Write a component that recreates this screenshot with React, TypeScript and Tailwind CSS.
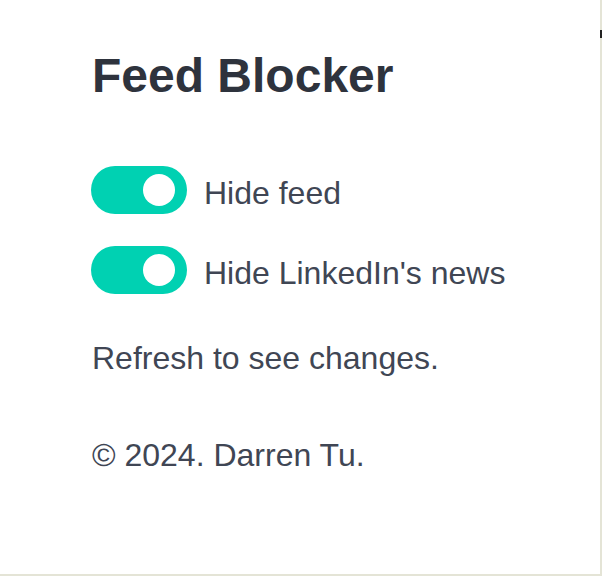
import React from "react";

interface ToggleRowProps {
  label: string,
  checked: boolean,
}

function ToggleRow({ label, checked }: ToggleRowProps) {
  return (
    <label className="flex items-center gap-[17px] h-[48px] cursor-pointer">
      <span className={`flex items-center justify-end pr-[12px] w-[96px] h-[48px] rounded-full ${checked ? "bg-[#00d1b2]" : "bg-[#d5d9e0]"}`}>
        <span className="w-[32px] h-[32px] rounded-full bg-white" />
      </span>
      <span className="h-[48px] pt-[3px] text-[32px] leading-[48px] text-[#404654]">{label}</span>
    </label>
  )
}

export default function App() {
  return (
    <div className="relative w-[602px] h-[576px] bg-[#e4e4d6]" style={{ fontFamily: '"Liberation Sans", Arial, sans-serif' }}>
      <div className="w-[600px] h-[574px] bg-white pl-[91px] pt-[49px]">
        <h1 className="text-[48px] leading-[54px] font-bold text-[#2e333d] pl-px">Feed Blocker</h1>
        <div className="flex flex-col gap-[32px] mt-[63px]">
          <ToggleRow label="Hide feed" checked={true} />
          <ToggleRow label="Hide LinkedIn's news" checked={true} />
        </div>
        <p className="mt-[40px] pl-px text-[32px] leading-[48px] text-[#404654]">Refresh to see changes.</p>
        <p className="mt-[49px] pl-px text-[32px] leading-[48px] text-[#404654]">© 2024. Darren Tu.</p>
      </div>
      <div className="absolute right-0 top-[30px] w-[2px] h-[8px] bg-[#222]" />
    </div>
  )
}
